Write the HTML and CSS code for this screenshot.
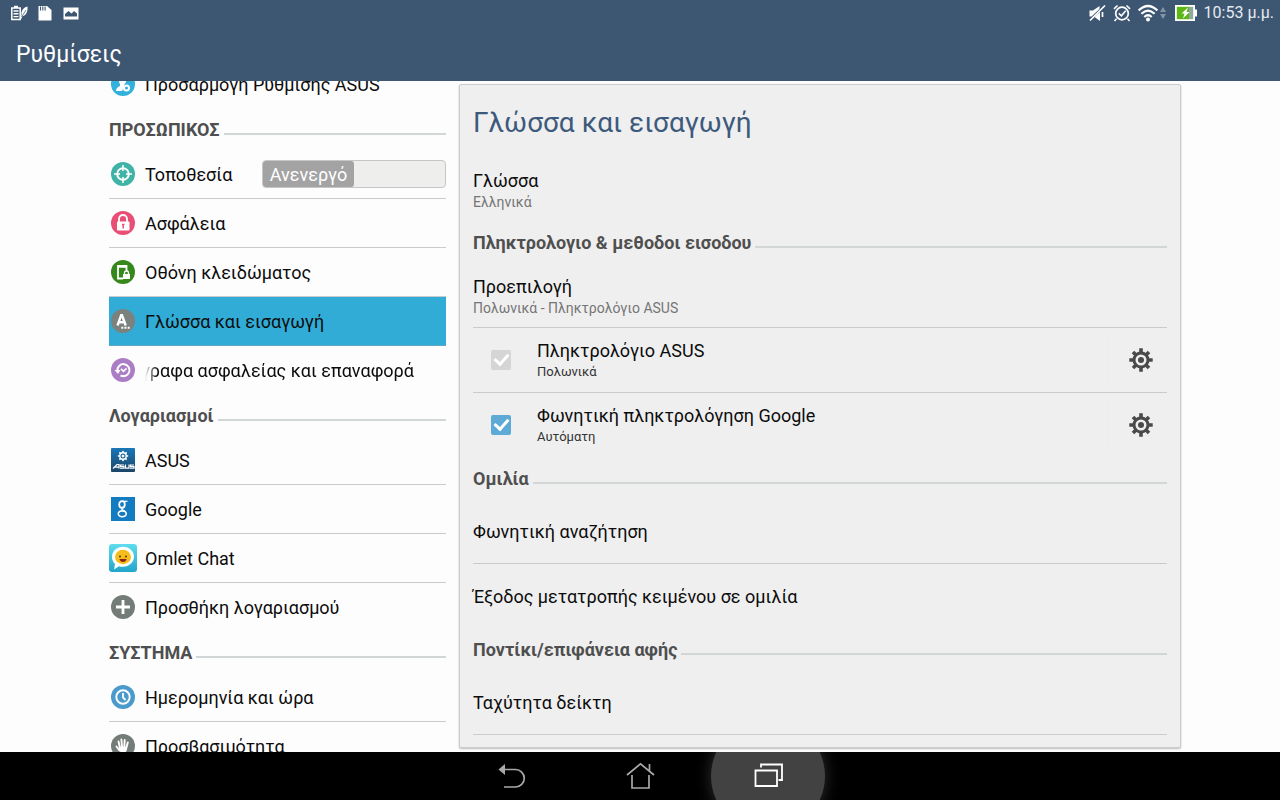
FILE: index.html
```html
<!DOCTYPE html>
<html lang="el">
<head>
<meta charset="utf-8">
<meta name="viewport" content="width=device-width, initial-scale=1">
<title>Ρυθμίσεις</title>
<link rel="stylesheet" href="styles.css">
</head>
<body>
<svg class="defs" aria-hidden="true">
  <symbol id="gear" viewBox="0 0 24 24">
    <path d="M12 .3v5M12 18.700v5M.3 12h5M18.700 12h5M4 4l3 3M17 17l3 3M4 20l3-3M17 7l3-3" fill="none" stroke="currentColor" stroke-width="3.600"/>
    <circle cx="12" cy="12" r="7" fill="none" stroke="currentColor" stroke-width="3"/>
    <circle cx="12" cy="12" r="3" fill="currentColor"/>
  </symbol>
</svg>

<header class="top">
  <div class="status">
    <div class="status-group">
      <svg class="s-icon" viewBox="0 0 18 18"><path d="M1.800 4h8.400v11.500H1.800zM4 2.500h4" fill="none" stroke="#fff" stroke-width="1.500"/><path d="M3.500 7h5M3.500 9.800h5M3.500 12.600h5" stroke="#fff" stroke-width="1.400"/><path d="M17.500 2.500c-4 1-6.500 4-6 8.500l-1.500 4h1.200l1.300-3c4-.5 5.500-5 5-9.500z" fill="#fff"/><path d="M11.500 13l4.500-7" stroke="#3d5773" stroke-width=".7"/></svg>
      <svg class="s-icon" viewBox="0 0 18 18"><path d="M2.500 2h8.500l4.500 4v10.500h-13z" fill="#fff"/><path d="M4.500 2.500v4M6.800 2.500v4M9.100 2.500v4" stroke="#3d5773" stroke-width="1.100"/></svg>
      <svg class="s-icon" viewBox="0 0 18 18"><path fill-rule="evenodd" d="M1.500 3.500h15v12h-15zM3 12.500h12V9.500l-3-2.500-2.500 2.500-3-2.500L3 10z" fill="#fff"/></svg>
    </div>
    <div class="status-group status-right">
      <svg class="s-icon" viewBox="0 0 18 18"><path d="M1.500 6.500h3.500l6.500-4.500v3l-8 7.500h-2zM6.500 13l5.500-5v9z" fill="#fff"/><path d="M17 1.500L2 16.500M14.500 8v5" stroke="#fff" stroke-width="1.700"/></svg>
      <svg class="s-icon" viewBox="0 0 18 18" fill="none" stroke="#fff"><circle cx="9" cy="9.500" r="6.300" stroke-width="1.700"/><path d="M5.800 9.300l2.600 2.500 4.300-5" stroke-width="1.600"/><path d="M1 4.800L4.500 1.500M13.500 1.500L17 4.800M3.500 14.800l-2 2.200M14.500 14.800l2 2.200" stroke-width="1.600"/></svg>
      <span class="wifi">
        <svg class="s-icon wide" viewBox="0 0 20 18"><g fill="none" stroke="#fff" stroke-width="2.200"><path d="M.6 6.500Q10-2.500 19.400 6.500M3.400 9.800Q10 3.500 16.600 9.800M6.300 13Q10 9.500 13.700 13"/></g><circle cx="10" cy="15.500" r="2" fill="#fff"/></svg>
        <svg class="updown" viewBox="0 0 6 14"><path d="M0 6l3-5 3 5zM0 8l3 5 3-5z" fill="#8594a5"/></svg>
      </span>
      <svg class="s-icon battery" viewBox="0 0 22 16"><path d="M0 0h20v4.500h2v7h-2V16H0z" fill="#fff"/><path d="M1.800 1.800h12.200v12.400H1.800z" fill="#5cb615"/><path d="M14 1.800h4.200v12.400H14z" fill="#92a6a2"/><path d="M13 2.500l-6.500 6h3l-1.500 5 6.500-6.500h-3z" fill="#fff"/></svg>
      <time>10:53 μ.μ.</time>
    </div>
  </div>
  <h1 class="app-title">Ρυθμίσεις</h1>
</header>

<main class="content">
  <nav class="side" aria-label="Ρυθμίσεις">
    <div class="side-scroll">
      <a class="item last" href="#asus-settings"><svg class="icon" viewBox="0 0 28 28"><circle cx="14" cy="14" r="12" fill="#31b1dc"/><path d="M10 9h7v3l-2 3v2l-2 4H7c0-3 2-4 4-5v-2c-1-1-1-3-1-5z" fill="#fff"/><circle cx="17.500" cy="18" r="2.500" fill="#31b1dc" stroke="#fff" stroke-width="2"/></svg><span>Προσαρμογή Ρύθμισης ASUS</span></a>

      <h2 class="category">ΠΡΟΣΩΠΙΚΟΣ</h2>
      <div class="item">
        <svg class="icon" viewBox="0 0 28 28"><circle cx="14" cy="14" r="12" fill="#3fb3a5"/><circle cx="14" cy="14" r="5.800" fill="none" stroke="#fff" stroke-width="2"/><path d="M14 5v6M14 17v6M5 14h6M17 14h6" stroke="#fff" stroke-width="1.500"/></svg>
        <span id="loc">Τοποθεσία</span>
        <button class="switch" role="switch" aria-checked="false" aria-labelledby="loc"><span class="thumb">Ανενεργό</span></button>
      </div>
      <a class="item" href="#security"><svg class="icon" viewBox="0 0 28 28"><circle cx="14" cy="14" r="12" fill="#e94f74"/><path d="M10 13v-3a4 4 0 0 1 8 0v3" fill="none" stroke="#fff" stroke-width="1.800"/><rect x="8" y="12.500" width="12.500" height="9" rx="1" fill="#fff"/><path d="M14.200 15v4.500M13 15.500h2.500" stroke="#e94f74" stroke-width="1.500"/></svg><span>Ασφάλεια</span></a>
      <a class="item" href="#lock"><svg class="icon" viewBox="0 0 28 28"><circle cx="14" cy="14" r="12" fill="#36881c"/><path d="M17.500 13V8H9v12.500h5" fill="none" stroke="#fff" stroke-width="1.800"/><path d="M9 8.500h9" stroke="#fff" stroke-width="2.500"/><rect x="14" y="16" width="7" height="5" fill="#fff"/><path d="M15.500 16v-1a2 2 0 0 1 4 0v1" fill="none" stroke="#fff" stroke-width="1.300"/></svg><span>Οθόνη κλειδώματος</span></a>
      <a class="item selected" href="#language" aria-current="page"><svg class="icon" viewBox="0 0 28 28"><circle cx="14" cy="14" r="12" fill="#7b827d"/><path d="M8.500 18.500L12.200 8.200h.8l3.700 10.300M10 15.300h5.500" fill="none" stroke="#fff" stroke-width="2.400"/><path d="M12.300 20.800h2M15.500 20.800h2M18.700 20.800h2" stroke="#fff" stroke-width="2"/></svg><span>Γλώσσα και εισαγωγή</span></a>
      <a class="item last" href="#backup"><svg class="icon" viewBox="0 0 28 28"><circle cx="14" cy="14" r="12" fill="#aa7dc4"/><path d="M8.500 14.500A6 6 0 1 1 11.500 19.300" fill="none" stroke="#fff" stroke-width="2"/><path d="M5.500 14h6l-2.500 4z" fill="#fff"/><path d="M12 12.800l2.500 2.500 3-3" fill="none" stroke="#fff" stroke-width="1.800"/></svg><span class="marquee"><span>Αντίγραφα ασφαλείας και επαναφορά</span></span></a>

      <h2 class="category">Λογαριασμοί</h2>
      <a class="item" href="#asus"><svg class="icon" viewBox="0 0 28 28"><defs><linearGradient id="ab" x2="0" y2="1"><stop stop-color="#1978b8"/><stop offset="1" stop-color="#1c4566"/></linearGradient></defs><rect x="2" y="2" width="24" height="24" rx="1" fill="url(#ab)"/><use href="#gear" x="8.500" y="4.500" width="11" height="11" color="#fff"/><path d="M4 22.500l4-4h2v4M6 21.200h4M15 19h-3.500v1.500H15v1.700h-4M16.500 18.500v3.700H20v-3.700M25 19h-3.500v1.500H25v1.700h-4" fill="none" stroke="#fff" stroke-width="1.200"/></svg><span>ASUS</span></a>
      <a class="item" href="#google"><svg class="icon" viewBox="0 0 28 28"><rect x="2" y="2" width="24" height="24" fill="#137bbf"/><g fill="none" stroke="#fff"><ellipse cx="13" cy="9.500" rx="2.800" ry="3.300" stroke-width="1.800"/><path d="M14 6.300h4.500" stroke-width="1.200"/><path d="M15 12c-4 1.500-2 2.500 1 4.500" stroke-width="1.500"/><ellipse cx="13.300" cy="18.800" rx="4" ry="2.900" stroke-width="1.600"/></g></svg><span>Google</span></a>
      <a class="item" href="#omlet"><svg class="icon" viewBox="0 0 28 28"><defs><linearGradient id="ob" x2="0" y2="1"><stop stop-color="#5fdcee"/><stop offset="1" stop-color="#22a5cb"/></linearGradient></defs><rect width="28" height="28" rx="3" fill="url(#ob)"/><path d="M14 2.800c6.500 0 11 4.500 11 10s-5 10-11 10c-1.500 0-3-.2-4-.6L5 25.500 6 20c-2-1.800-3-4.200-3-7 0-6 5-10.200 11-10.200z" fill="#fff"/><ellipse cx="14" cy="13" rx="8" ry="7.200" fill="#f4bc1c"/><circle cx="11" cy="12.500" r="1" fill="#5c3a10"/><circle cx="17" cy="12.500" r="1" fill="#5c3a10"/><path d="M10.500 15h7c-.5 4-6.500 4-7 0z" fill="#8a2318"/></svg><span>Omlet Chat</span></a>
      <a class="item last" href="#add"><svg class="icon" viewBox="0 0 28 28"><circle cx="14" cy="14" r="12" fill="#747c77"/><path d="M14 7v14M7 14h14" stroke="#fff" stroke-width="2.800"/></svg><span>Προσθήκη λογαριασμού</span></a>

      <h2 class="category">ΣΥΣΤΗΜΑ</h2>
      <a class="item" href="#date"><svg class="icon" viewBox="0 0 28 28"><circle cx="14" cy="14" r="12" fill="#4a9bcb"/><circle cx="14" cy="14" r="6.700" fill="none" stroke="#fff" stroke-width="1.900"/><path d="M14 10v4.500l2.500 2.500" fill="none" stroke="#fff" stroke-width="1.800"/></svg><span>Ημερομηνία και ώρα</span></a>
      <a class="item" href="#accessibility"><svg class="icon" viewBox="0 0 28 28"><circle cx="14" cy="14" r="12" fill="#747c77"/><path d="M11 16L9.500 9.500M13 15l-.6-7.500M15.300 15l.4-7M17.300 16l1.500-5.500M10.500 18.500L7.500 14.500" stroke="#fff" stroke-width="1.900" stroke-linecap="round"/><path d="M10 15l8-.5c.5 4-1 6.500-4 6.500s-4-3-4-6z" fill="#fff"/></svg><span>Προσβασιμότητα</span></a>
    </div>
  </nav>

  <section class="panel">
    <h2 class="panel-title">Γλώσσα και εισαγωγή</h2>
    <a class="row last" href="#locale"><span class="text low"><span class="name">Γλώσσα</span><span class="sub">Ελληνικά</span></span></a>

    <h3 class="category">Πληκτρολογιο &amp; μεθοδοι εισοδου</h3>
    <a class="row" href="#default"><span class="text low"><span class="name">Προεπιλογή</span><span class="sub">Πολωνικά - Πληκτρολόγιο ASUS</span></span></a>
    <div class="row">
      <input class="check" type="checkbox" id="kb-asus" checked disabled>
      <label class="text" for="kb-asus"><span class="name">Πληκτρολόγιο ASUS</span><span class="sub dark">Πολωνικά</span></label>
      <button class="gear" aria-label="Ρυθμίσεις: Πληκτρολόγιο ASUS"><svg><use href="#gear"/></svg></button>
    </div>
    <div class="row last">
      <input class="check" type="checkbox" id="kb-google" checked>
      <label class="text" for="kb-google"><span class="name">Φωνητική πληκτρολόγηση Google</span><span class="sub dark">Αυτόματη</span></label>
      <button class="gear" aria-label="Ρυθμίσεις: Φωνητική πληκτρολόγηση Google"><svg><use href="#gear"/></svg></button>
    </div>

    <h3 class="category">Ομιλία</h3>
    <a class="row single" href="#voice"><span class="name">Φωνητική αναζήτηση</span></a>
    <a class="row single last" href="#tts"><span class="name">Έξοδος μετατροπής κειμένου σε ομιλία</span></a>

    <h3 class="category">Ποντίκι/επιφάνεια αφής</h3>
    <a class="row single" href="#pointer"><span class="name">Ταχύτητα δείκτη</span></a>
  </section>
</main>

<footer class="navbar">
  <button class="nav-btn" aria-label="Πίσω"><svg viewBox="0 0 30 30"><path d="M4 8.500h14.500a8.700 8.700 0 0 1 0 17.500H7" fill="none" stroke="#a9a9a9" stroke-width="1.700"/><path d="M1.500 8.500L8 3v11z" fill="#a9a9a9"/></svg></button>
  <button class="nav-btn" aria-label="Αρχική"><svg viewBox="0 0 30 30" fill="none" stroke="#a9a9a9" stroke-width="1.700"><path d="M2 14L15.500 2.800 29 14M24.500 9.500V3M7 14v13h17V14"/></svg></button>
  <button class="nav-btn pressed" aria-label="Πρόσφατα"><svg viewBox="0 0 30 30" fill="none" stroke="#fff" stroke-width="1.800"><path d="M2.500 9.500H24V25H2.500zM8 6.500V3.500h21v15.500h-3.500"/></svg></button>
</footer>
</body>
</html>
```
FILE: styles.css
```css
* { box-sizing: border-box; }

body {
  margin: 0;
  height: 100vh;
  display: flex;
  flex-direction: column;
  overflow: hidden;
  background: #fdfdfd;
  color: #0c0c0c;
  font: 18px/22px Roboto, "Noto Sans", sans-serif;
}

a { color: inherit; text-decoration: none; }
button { margin: 0; padding: 0; border: 0; background: none; font: inherit; color: inherit; }
h1, h2, h3 { margin: 0; }
.defs { display: none; }

/* Status bar and title */
.top { background: #3d5773; color: #fff; }
.status {
  display: flex;
  justify-content: space-between;
  align-items: center;
  height: 25px;
  padding: 0 6px 0 10px;
  font-size: 16px;
  color: #e6eaee;
}
.status-group { display: flex; align-items: center; gap: 8px; }
.status-right { gap: 7px; }
.s-icon { width: 18px; height: 18px; }
.s-icon.wide { width: 20px; }
.s-icon.battery { width: 22px; height: 16px; }
.wifi { display: flex; align-items: center; gap: 2px; padding-right: 2px; }
.updown { width: 6px; height: 14px; }
.app-title {
  padding: 4px 16px 0;
  font-size: 23px;
  font-weight: 400;
  line-height: 52px;
}

/* Two-pane content */
.content {
  flex: 1;
  min-height: 0;
  display: grid;
  grid-template-columns: minmax(0, 337fr) minmax(0, 722fr);
  grid-template-rows: minmax(0, 1fr);
  gap: 13px;
  padding: 0 99px 0 109px;
}
.side { overflow: hidden; }
.side-scroll { margin-top: -21px; }

.category {
  display: flex;
  align-items: center;
  gap: 4px;
  height: 41px;
  color: #4f4f4f;
  font-size: 18px;
  font-weight: 700;
  white-space: nowrap;
}
.category::after {
  content: "";
  flex: 1;
  height: 2px;
  margin-top: 8px;
  background: #d2d6d6;
}

.item {
  display: flex;
  align-items: center;
  gap: 8px;
  height: 49px;
  border-bottom: 1px solid #cbcbcb;
  white-space: nowrap;
}
.item > span { padding-top: 2px; }
.item.last, .row.last { border-bottom-color: transparent; }
.item.selected { background: #31acd6; border-bottom-color: #5fa9c4; }
.icon { flex: none; width: 28px; height: 28px; }

.marquee {
  flex: 1;
  min-width: 0;
  display: flex;
  justify-content: flex-end;
  overflow: hidden;
  margin-right: 32px;
  mask-image: linear-gradient(to right, transparent, #000 12px);
}

.switch {
  width: 184px;
  height: 28px;
  margin-left: auto;
  border: 1px solid #c6c6c6;
  border-radius: 4px;
  background: #eeeeed;
  display: flex;
}
.thumb {
  width: 50%;
  border-radius: 3px;
  background: #a3a3a3;
  color: #fff;
  line-height: 28px;
}

/* Detail panel */
.panel {
  margin: 3px 0 4px;
  padding: 0 13px;
  overflow: hidden;
  border: 1px solid #cdcdcd;
  border-radius: 2px;
  background: #efefef;
  box-shadow: 0 1px 2px #bbb;
}
.panel-title {
  height: 72px;
  padding-top: 4px;
  color: #3d5a7d;
  font-size: 28px;
  font-weight: 400;
  line-height: 68px;
}
.row {
  display: flex;
  align-items: center;
  height: 65px;
  border-bottom: 1px solid #cbcbcb;
}
.row.single { padding-top: 2px; }
.text { flex: 1; display: flex; flex-direction: column; padding-top: 2px; }
.text.low { padding-top: 4px; }
.sub { color: #757575; font-size: 14px; line-height: 20px; }
.sub.dark { color: #333; font-size: 13px; }

.check {
  appearance: none;
  width: 20px;
  height: 20px;
  margin: 0 26px 0 18px;
  border-radius: 2px;
  background: #5eaad6;
  display: grid;
  place-items: center;
}
.check:disabled { background: #d5d5d5; }
.check:checked::after {
  content: "";
  width: 6px;
  height: 11px;
  margin-bottom: 4px;
  border: solid #fff;
  border-width: 0 3px 3px 0;
  rotate: 42deg;
}
.gear {
  display: grid;
  place-items: center;
  width: 60px;
  height: 50px;
  border-left: 1px solid #ececec;
  color: #4a4a4a;
}
.gear svg { width: 24px; height: 24px; margin-left: 6px; }

/* System navigation */
.navbar {
  display: flex;
  justify-content: center;
  gap: 14px;
  height: 48px;
  overflow: hidden;
  background: #000;
}
.nav-btn {
  flex: none;
  width: 114px;
  height: 114px;
  margin-top: -33px;
  display: grid;
  place-items: center;
  border-radius: 50%;
}
.nav-btn svg { width: 30px; height: 30px; }
.pressed { background: #424242; box-shadow: 0 0 16px #303030; }
```
